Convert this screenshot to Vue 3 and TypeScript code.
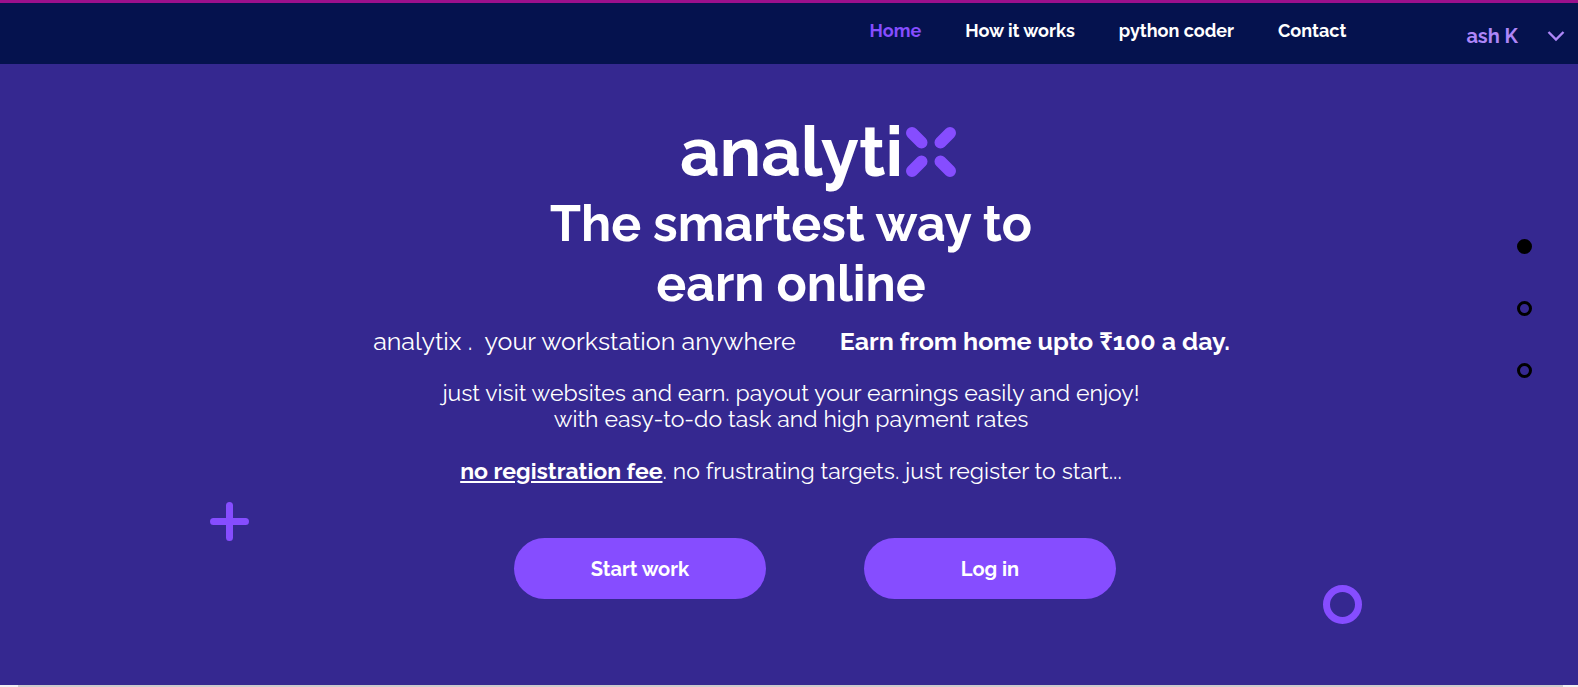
<script setup lang="ts">
import { ref } from 'vue'

interface NavItem {
  label: string
  href: string
}

const navItems: NavItem[] = [
  { label: 'Home', href: '#home' },
  { label: 'How it works', href: '#how' },
  { label: 'python coder', href: '#coder' },
  { label: 'Contact', href: '#contact' },
]
const sections: string[] = ['Intro', 'Tasks', 'Payments']
const current = ref(0)
</script>

<template>
  <div class="page">
    <header class="bar">
      <nav class="nav">
        <a
          v-for="(item, i) in navItems"
          :key="item.href"
          :href="item.href"
          :class="['nav-link', { active: i === 0 }]"
        >{{ item.label }}</a>
      </nav>
      <button class="user" type="button">
        <span>ash K</span>
        <svg class="chevron" viewBox="0 0 18 12" aria-hidden="true">
          <path d="M1.5 2 L9 9.5 L16.500 2" fill="none" stroke="currentColor" stroke-width="2.4" />
        </svg>
      </button>
    </header>

    <main class="hero">
      <div class="logo">
        <span class="logo-text">analyti</span>
        <svg class="logo-x" viewBox="0 0 50 50" aria-hidden="true">
          <path
            d="M6 6 L15.500 15.500 M44 6 L34.500 15.500 M6 44 L15.500 34.500 M44 44 L34.500 34.500"
            stroke="currentColor" stroke-width="12" stroke-linecap="round"
          />
        </svg>
      </div>
      <h1 class="title">The smartest way to<br />earn online</h1>
      <div class="tagline">
        <span>analytix .&nbsp; your workstation anywhere</span>
        <strong>Earn from home upto ₹100 a day.</strong>
      </div>
      <p class="copy">
        just visit websites and earn. payout your earnings easily and enjoy!<br />
        with easy-to-do task and high payment rates
      </p>
      <p class="copy">
        <strong class="fee">no registration fee</strong>. no frustrating targets. just register to start...
      </p>
      <div class="actions">
        <button class="action" type="button">Start work</button>
        <button class="action" type="button">Log in</button>
      </div>

      <svg class="plus" viewBox="0 0 39 39" aria-hidden="true">
        <path d="M19.500 3.500 V35.500 M3.500 19.500 H35.500" stroke="currentColor" stroke-width="7" stroke-linecap="round" />
      </svg>
      <span class="ring" aria-hidden="true"></span>
      <div class="dots">
        <button
          v-for="(name, i) in sections"
          :key="name"
          type="button"
          :aria-label="name"
          :class="['dot', { filled: i === current }]"
          @click="current = i"
        ></button>
      </div>
    </main>
    <div class="scroll-track"><div class="scroll-thumb"></div></div>
  </div>
</template>

<style>
body {
  margin: 0;
}
</style>

<style scoped>
.page {
  display: flex;
  flex-direction: column;
  min-height: 100vh;
  background: #352890;
  color: #fff;
  font-family: Raleway, Lato, "Noto Sans", sans-serif;
}
button {
  padding: 0;
  border: 0;
  background: none;
  color: inherit;
  font: inherit;
  cursor: pointer;
}
.bar {
  display: flex;
  justify-content: flex-end;
  height: 61px;
  border-top: 3px solid #9b108c;
  background: #05124e;
}
.nav {
  display: flex;
  gap: 44px;
  margin-right: 120px;
  padding-top: 16px;
  font-size: 18px;
  font-weight: 700;
  line-height: 24px;
}
.nav-link {
  color: #fff;
  text-decoration: none;
}
.nav-link.active {
  color: #864dff;
}
.user {
  display: flex;
  align-items: center;
  align-self: flex-start;
  gap: 29px;
  margin-right: 13px;
  padding-top: 20px;
  color: #ae86f8;
  font-size: 20px;
  font-weight: 700;
  line-height: 26px;
}
.chevron {
  width: 18px;
  height: 12px;
}
.hero {
  position: relative;
  display: flex;
  flex: 1;
  flex-direction: column;
  align-items: center;
  padding-top: 48px;
}
.logo {
  display: flex;
  align-items: center;
  gap: 3px;
  margin-left: 58px;
}
.logo-text {
  font-size: 69px;
  font-weight: 700;
  line-height: 80px;
}
.logo-x {
  width: 50px;
  height: 50px;
  color: #864dff;
}
.title {
  margin: 2px 0 0 4px;
  font-size: 50px;
  font-weight: 700;
  line-height: 60px;
  text-align: center;
}
.tagline {
  display: flex;
  gap: 44px;
  margin: 11px 0 0 25px;
  font-size: 25px;
  line-height: 32px;
}
.copy {
  margin: 23px 0 0 4px;
  font-size: 23px;
  line-height: 26px;
  text-align: center;
}
.copy + .copy {
  margin-top: 26px;
}
.fee {
  text-decoration: underline;
}
.actions {
  display: flex;
  gap: 98px;
  margin: 54px 0 0 52px;
}
.action {
  width: 252px;
  height: 61px;
  border-radius: 31px;
  background: #864dff;
  font-size: 20px;
  font-weight: 700;
}
.plus {
  position: absolute;
  bottom: 144px;
  left: 210px;
  width: 39px;
  height: 39px;
  color: #864dff;
}
.ring {
  position: absolute;
  right: 216px;
  bottom: 61px;
  box-sizing: border-box;
  width: 39px;
  height: 39px;
  border: 7px solid #864dff;
  border-radius: 50%;
}
.dots {
  position: absolute;
  top: 175px;
  right: 46px;
  display: flex;
  flex-direction: column;
  gap: 47px;
}
.dot {
  width: 15px;
  height: 15px;
  border: 3px solid #000;
  border-radius: 50%;
}
.dot.filled {
  background: #000;
}
.scroll-track {
  padding: 0 15px 0 18px;
  background: #f1f1f1;
}
.scroll-thumb {
  height: 2px;
  background: #ccc;
}
</style>
